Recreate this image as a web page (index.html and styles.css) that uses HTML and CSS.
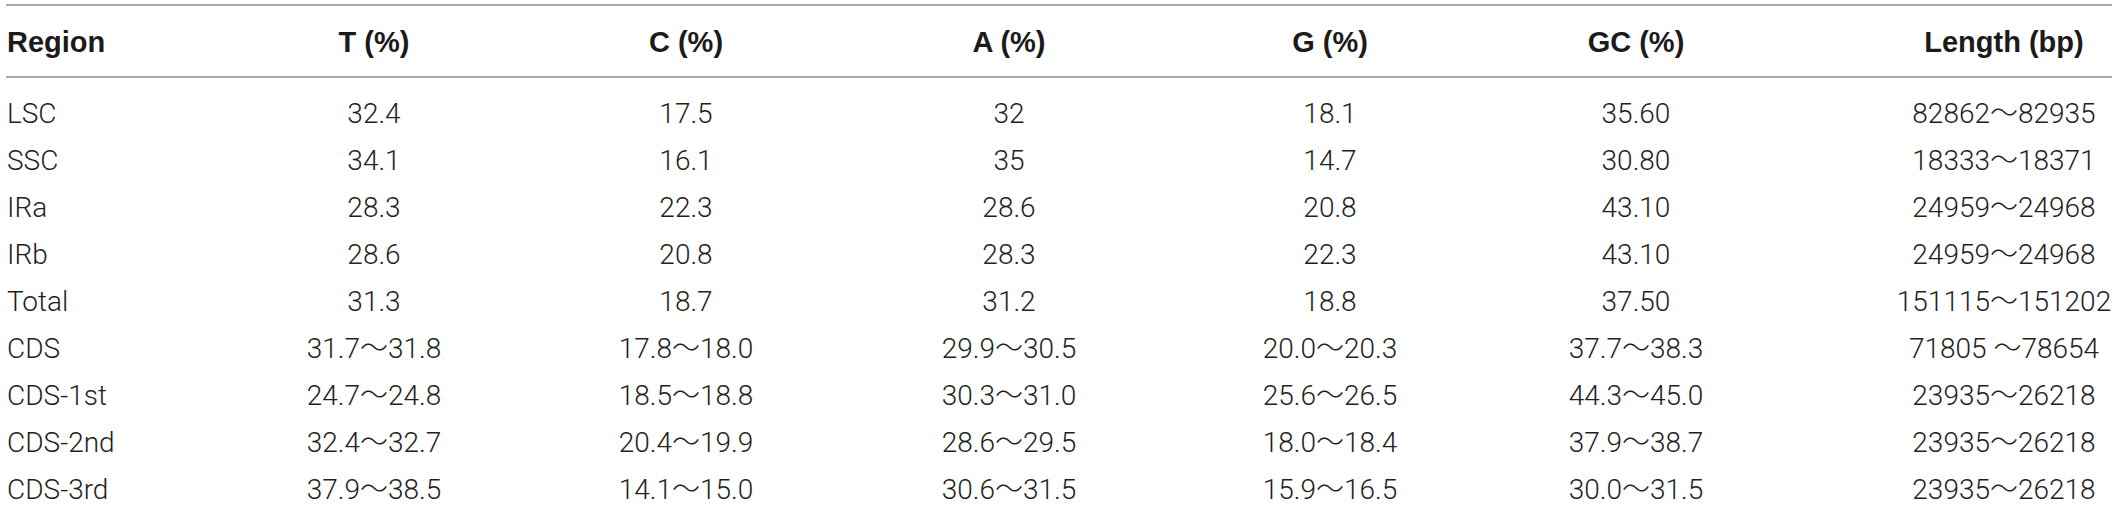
FILE: index.html
```html
<!DOCTYPE html>
<html lang="en">
<head>
<meta charset="utf-8">
<title>Base composition</title>
<link rel="stylesheet" href="styles.css">
</head>
<body>
<div class="table">
  <div class="row head">
    <div class="cell first">Region</div>
    <div class="cell">T (%)</div>
    <div class="cell">C (%)</div>
    <div class="cell">A (%)</div>
    <div class="cell">G (%)</div>
    <div class="cell">GC (%)</div>
    <div class="cell last">Length (bp)</div>
  </div>
  <div class="body">
    <div class="row">
      <div class="cell first">LSC</div><div class="cell">32.4</div><div class="cell">17.5</div><div class="cell">32</div><div class="cell">18.1</div><div class="cell">35.60</div><div class="cell last">82862～82935</div>
    </div>
    <div class="row">
      <div class="cell first">SSC</div><div class="cell">34.1</div><div class="cell">16.1</div><div class="cell">35</div><div class="cell">14.7</div><div class="cell">30.80</div><div class="cell last">18333～18371</div>
    </div>
    <div class="row">
      <div class="cell first">IRa</div><div class="cell">28.3</div><div class="cell">22.3</div><div class="cell">28.6</div><div class="cell">20.8</div><div class="cell">43.10</div><div class="cell last">24959～24968</div>
    </div>
    <div class="row">
      <div class="cell first">IRb</div><div class="cell">28.6</div><div class="cell">20.8</div><div class="cell">28.3</div><div class="cell">22.3</div><div class="cell">43.10</div><div class="cell last">24959～24968</div>
    </div>
    <div class="row">
      <div class="cell first">Total</div><div class="cell">31.3</div><div class="cell">18.7</div><div class="cell">31.2</div><div class="cell">18.8</div><div class="cell">37.50</div><div class="cell last">151115～151202</div>
    </div>
    <div class="row">
      <div class="cell first">CDS</div><div class="cell">31.7～31.8</div><div class="cell">17.8～18.0</div><div class="cell">29.9～30.5</div><div class="cell">20.0～20.3</div><div class="cell">37.7～38.3</div><div class="cell last">71805 ～78654</div>
    </div>
    <div class="row">
      <div class="cell first">CDS-1st</div><div class="cell">24.7～24.8</div><div class="cell">18.5～18.8</div><div class="cell">30.3～31.0</div><div class="cell">25.6～26.5</div><div class="cell">44.3～45.0</div><div class="cell last">23935～26218</div>
    </div>
    <div class="row">
      <div class="cell first">CDS-2nd</div><div class="cell">32.4～32.7</div><div class="cell">20.4～19.9</div><div class="cell">28.6～29.5</div><div class="cell">18.0～18.4</div><div class="cell">37.9～38.7</div><div class="cell last">23935～26218</div>
    </div>
    <div class="row">
      <div class="cell first">CDS-3rd</div><div class="cell">37.9～38.5</div><div class="cell">14.1～15.0</div><div class="cell">30.6～31.5</div><div class="cell">15.9～16.5</div><div class="cell">30.0～31.5</div><div class="cell last">23935～26218</div>
    </div>
  </div>
</div>
</body>
</html>
```

FILE: styles.css
```css
html, body {
  margin: 0;
  padding: 0;
  background: #ffffff;
  overflow: hidden;
}

body {
  height: 507px;
}

.table {
  margin: 4px 6px 0 6px;
  width: 2106px;
  border-top: 2px solid #a9a9a9;
  color: #231f20;
}

.row {
  display: grid;
  grid-template-columns: 212px 312px 312px 334px 308px 304px 324px;
}

.cell {
  text-align: center;
  white-space: nowrap;
}

.cell.first {
  text-align: left;
  padding-left: 1px;
}

.cell.last {
  padding-left: 108px;
}

.head {
  font-family: "Liberation Sans", Arial, sans-serif;
  font-weight: bold;
  font-size: 29px;
  line-height: 68px;
  padding-top: 2px;
  border-bottom: 2px solid #a9a9a9;
  color: #1c1a1b;
}

.body {
  padding-top: 12px;
  font-family: Roboto, "Noto Sans CJK JP", sans-serif;
  font-weight: 300;
  font-size: 28px;
}

.body .row {
  height: 47px;
  line-height: 47px;
}
```
